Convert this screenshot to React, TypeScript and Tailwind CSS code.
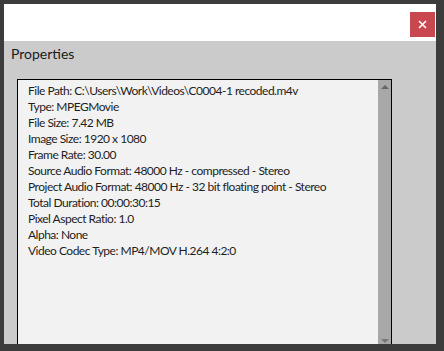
const LINES = [
  "File Path: C:\\Users\\Work\\Videos\\C0004-1 recoded.m4v",
  "Type: MPEGMovie",
  "File Size: 7.42 MB",
  "Image Size: 1920 x 1080",
  "Frame Rate: 30.00",
  "Source Audio Format: 48000 Hz - compressed - Stereo",
  "Project Audio Format: 48000 Hz - 32 bit floating point - Stereo",
  "Total Duration: 00:00:30:15",
  "Pixel Aspect Ratio: 1.0",
  "Alpha: None",
  "Video Codec Type: MP4/MOV H.264 4:2:0",
];

export default function App() {
  return (
    <div className="w-[444px] h-[351px] bg-[#3c3c3c] pt-[4px] pl-[4px] overflow-hidden" style={{ fontFamily: "Lato, sans-serif" }}>
      <div className="w-[432px] h-[340px] flex flex-col overflow-hidden">
        {/* title bar */}
        <div className="h-[37px] bg-white flex items-start justify-end pr-[1px] pt-[8px] shrink-0">
          <button className="w-[25px] h-[25px] bg-[#c9474e] flex items-center justify-center">
            <svg width="9" height="9" viewBox="0 0 9 9">
              <path d="M1 1L8 8M8 1L1 8" stroke="#fff" strokeWidth="1.6" />
            </svg>
          </button>
        </div>
        {/* body */}
        <div className="flex-1 bg-[#cbcbcb] flex flex-col pl-[13px]">
          <div className="h-[38px] pt-[2px] text-[14px] text-[#1a1a1a] -ml-[6px]">Properties</div>
          <div className="w-[375px] flex-1 border border-black border-b-0 bg-[#f2f2f2] flex">
            <div className="flex-1 pl-[10px] pt-[3px] text-[12px] leading-[16px] text-[#1e1e1e] tracking-[-0.5px]">
              {LINES.map((l, i) => (
                <div key={i} className="whitespace-nowrap">{l}</div>
              ))}
            </div>
            <div className="w-[13px] bg-[#a8a8a8] flex flex-col items-center justify-between pt-[5px] pb-[1px]">
              <svg width="8" height="4" viewBox="0 0 8 4"><path d="M0 4L4 0L8 4Z" fill="#666" /></svg>
              <svg width="8" height="4" viewBox="0 0 8 4"><path d="M0 0L4 4L8 0Z" fill="#777" /></svg>
            </div>
          </div>
        </div>
      </div>
    </div>
  );
}
